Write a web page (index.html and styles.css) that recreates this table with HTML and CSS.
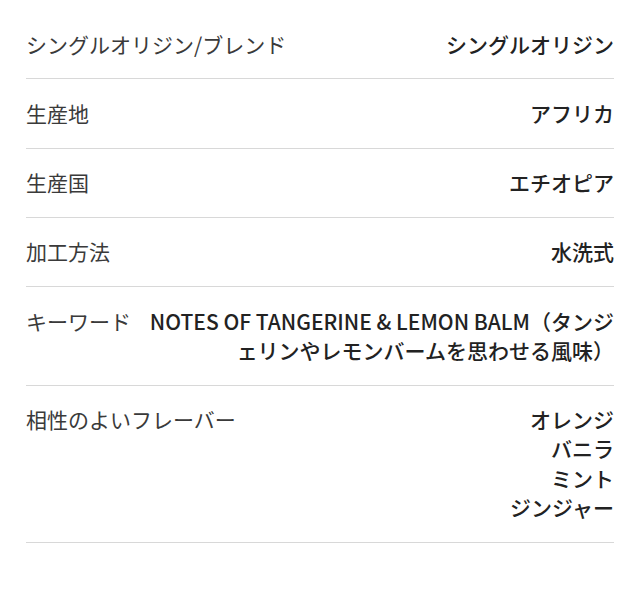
FILE: index.html
```html
<!DOCTYPE html>
<html lang="ja">
<head>
<meta charset="utf-8">
<link rel="stylesheet" href="styles.css">
</head>
<body>
<dl class="spec">
  <div class="row">
    <dt class="label">シングルオリジン/ブレンド</dt>
    <dd class="value">シングルオリジン</dd>
  </div>
  <div class="row">
    <dt class="label">生産地</dt>
    <dd class="value">アフリカ</dd>
  </div>
  <div class="row">
    <dt class="label">生産国</dt>
    <dd class="value">エチオピア</dd>
  </div>
  <div class="row">
    <dt class="label">加工方法</dt>
    <dd class="value">水洗式</dd>
  </div>
  <div class="row">
    <dt class="label">キーワード</dt>
    <dd class="value">NOTES OF TANGERINE &amp; LEMON BALM（タンジェリンやレモンバームを思わせる風味）</dd>
  </div>
  <div class="row">
    <dt class="label">相性のよいフレーバー</dt>
    <dd class="value">オレンジ<br>バニラ<br>ミント<br>ジンジャー</dd>
  </div>
</dl>
</body>
</html>
```
FILE: styles.css
```css
html, body {
  margin: 0;
  padding: 0;
  background: #fff;
}
body {
  font-family: "Noto Sans CJK JP", "Noto Sans", sans-serif;
  font-size: 21px;
  line-height: 29.25px;
  color: #333;
}
.spec {
  margin: 0;
  padding: 10px 26px 0;
}
.row {
  display: flex;
  justify-content: space-between;
  gap: 16px;
  padding: 19.5px 0;
  border-bottom: 1px solid #d8d8d8;
}
.label {
  margin: 0;
  white-space: nowrap;
  font-weight: 400;
  color: #3a3a3a;
}
.value {
  margin: 0;
  text-align: right;
  font-weight: 500;
  color: #222;
}
```
